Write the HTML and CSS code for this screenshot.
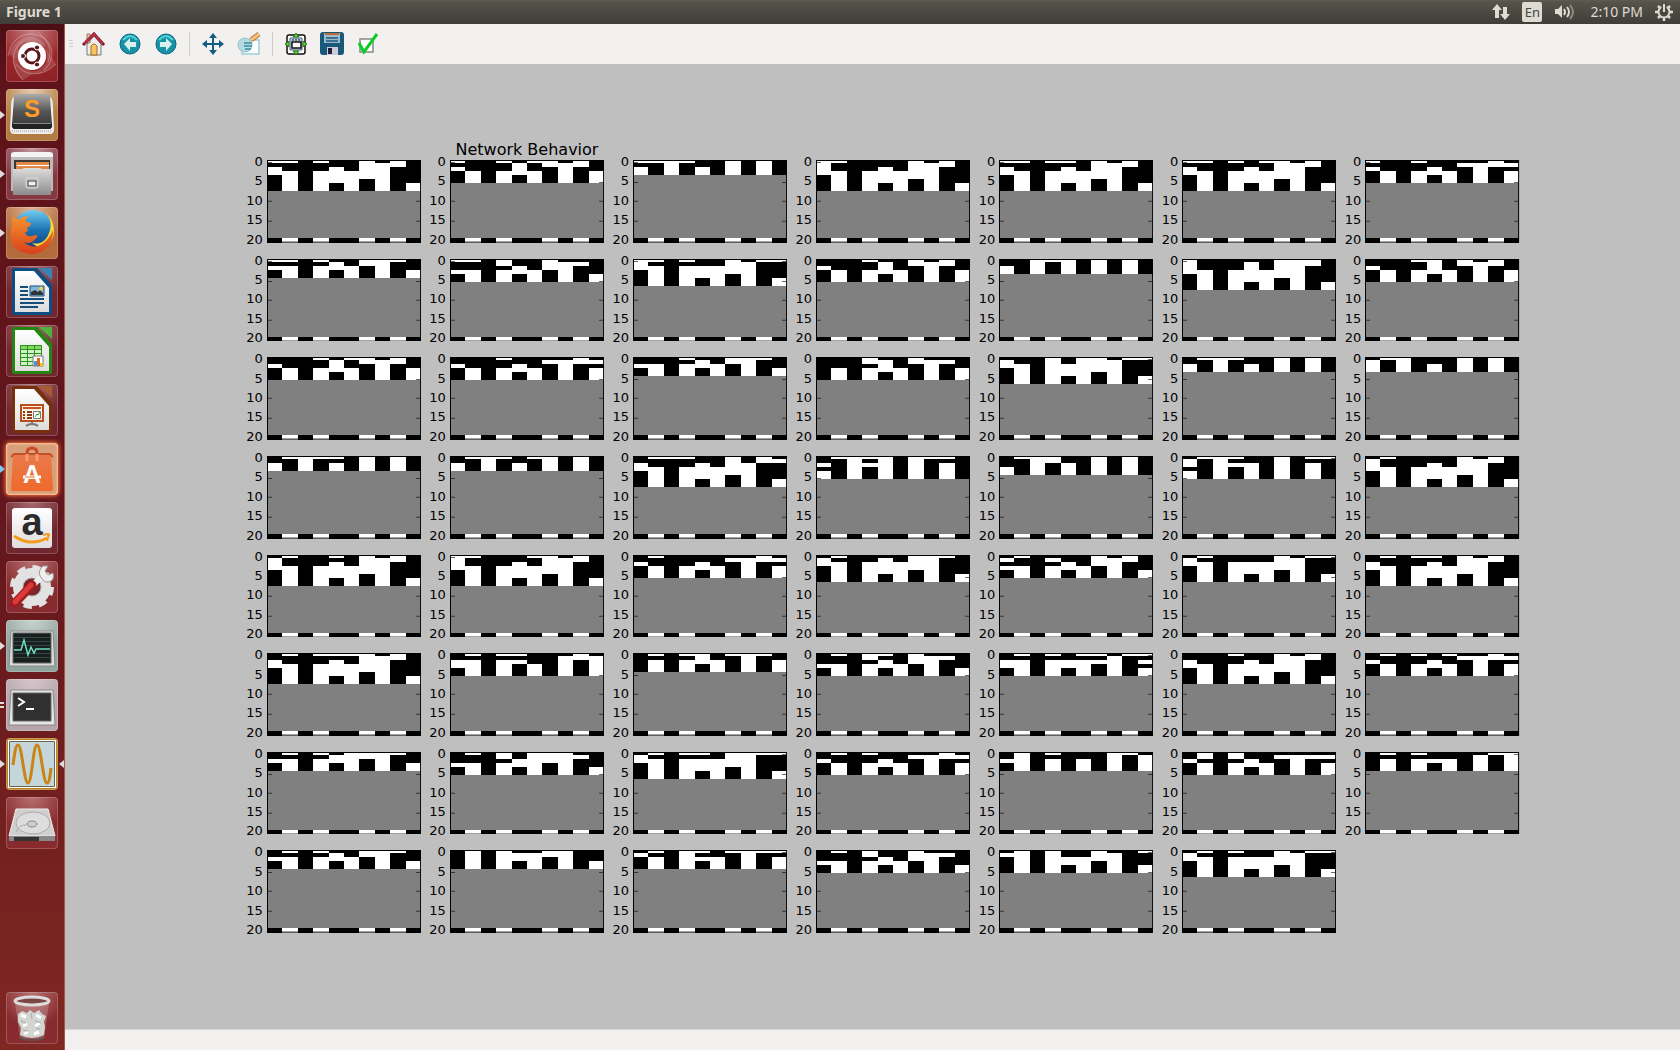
FILE: index.html
```html
<!DOCTYPE html>
<html lang="en">
<head>
<meta charset="utf-8">
<title>Figure 1</title>
<link rel="stylesheet" href="styles.css">
</head>
<body>
<header class="panel">
  <h1 class="panel-title">Figure 1</h1>
  <div class="indicators">
    <svg class="ind-net" width="18" height="18" viewBox="0 0 18 18" fill="#dfdbd2"><path d="M5 1l5 6H7v8H3V7H0zM13 17l-5-6h3V4h4v7h3z"/></svg>
    <span class="lang">En</span>
    <svg class="ind-sound" width="20" height="18" viewBox="0 0 20 18" fill="none" stroke-width="2"><path d="M0 6h3l4-4v13l-4-4H0z" fill="#dfdbd2"/><path d="M9 6q2 3 0 6M12 4q4 5 0 10" stroke="#dfdbd2"/><path d="M15 2q6 7 0 14" stroke="#8b8880"/></svg>
    <time class="clock">2:10 PM</time>
    <svg width="18" height="18" viewBox="0 0 18 18" fill="none" stroke="#dfdbd2"><circle cx="9" cy="9" r="5.5" stroke-width="2"/><path d="M9 15v3M0 9h3M15 9h3M3 3l2 2M15 3l-2 2M3 15l2-2M15 15l-2-2" stroke-width="2.5"/><path d="M9 0v9" stroke="#4a4943" stroke-width="5"/><path d="M9 1v8" stroke-width="2"/></svg>
  </div>
</header>
<div class="desktop">
  <nav class="launcher" aria-label="Launcher">
    <svg class="defs" width="0" height="0" aria-hidden="true"><defs>
      <linearGradient id="metal" x2="0" y2="1"><stop stop-color="#ddd"/><stop offset="1" stop-color="#8c8c8c"/></linearGradient>
      <linearGradient id="dark" x2="0" y2="1"><stop stop-color="#aaa"/><stop offset=".5" stop-color="#555"/><stop offset="1" stop-color="#333"/></linearGradient>
      <linearGradient id="page" x2="0" y2="1"><stop stop-color="#fff"/><stop offset="1" stop-color="#ddd"/></linearGradient>
      <linearGradient id="globe" x2="0" y2="1"><stop stop-color="#6fcdf0"/><stop offset=".5" stop-color="#1c74b4"/><stop offset="1" stop-color="#123a78"/></linearGradient>
      <linearGradient id="fox" x2="0" y2="1"><stop stop-color="#f5942e"/><stop offset="1" stop-color="#d9401c"/></linearGradient>
      <linearGradient id="bag" x2="0" y2="1"><stop stop-color="#e87a4c"/><stop offset="1" stop-color="#f06a2a"/></linearGradient>
    </defs></svg>
    <button class="tile tile-dash" aria-label="Dash"><svg viewBox="0 0 52 52"><g fill="none" stroke="#fff" stroke-opacity=".3"><path d="M2 26C5 8 20 0 34 6S50 30 38 40M17 50C4 36 5 20 16 12M50 34C36 48 18 46 10 34M32 2C44 12 46 22 42 32"/></g><path d="M3 23C12 4 30 2 40 16l-8-2C22 8 12 12 7 28zM17 50C5 40 5 24 12 16l1 12c2 10 12 16 20 12zM50 34C38 44 30 46 22 41l8 0c10-3 13-12 10-23z" fill="#fff" fill-opacity=".15"/><circle cx="26" cy="26" r="14" fill="#fff"/><circle cx="26" cy="26" r="7" fill="none" stroke="#5b1418" stroke-width="3"/><g fill="#5b1418" stroke="#fff"><circle cx="17" cy="26" r="2.5"/><circle cx="31" cy="17.500" r="2.500"/><circle cx="31" cy="34.500" r="2.500"/></g></svg></button>
    <button class="tile tile-gold run" aria-label="Sublime Text"><svg viewBox="0 0 52 52"><path d="M8 8Q5 9 5 20L4 40q0 5 4 5h36q4 0 4-5L47 20Q47 9 44 8z" fill="#eee"/><path d="M6 42h40" stroke="#999" stroke-dasharray="1 1"/><path d="M10 5h32q2 0 2 3l2 28q0 4-3 4H9q-3 0-3-4L8 8q0-3 2-3z" fill="url(#dark)"/><path d="M6 34h40v2q0 4-3 4H9q-3 0-3-4z" fill="#222"/><path d="M7 34.500h38" stroke="#888"/><text x="26" y="28" text-anchor="middle" class="glyph" font-size="24" fill="#ff9d27">S</text></svg></button>
    <button class="tile tile-plum run" aria-label="Files"><svg viewBox="0 0 52 52"><path d="M8 4h36q3 0 3 3v36H5V7q0-3 3-3z" fill="#bbb"/><path d="M5 9V6q1-2 4-2h34q3 0 4 2v3z" fill="#f3f3f3"/><path d="M8 12h36v12H8z" fill="#3d3734"/><path d="M10 14h33v8H10z" fill="#e08848"/><path d="M11 17.500h32" stroke="#fff"/><path d="M7 21h9l2-1h16l2 1h9v26H7z" fill="url(#metal)"/><rect x="20" y="30" width="12" height="10" rx="2" fill="#bbb" stroke="#ddd"/><rect x="22" y="33" width="8" height="5" fill="#eee" stroke="#444"/></svg></button>
    <button class="tile tile-rust run" aria-label="Firefox"><svg viewBox="0 0 52 52"><circle cx="27" cy="23" r="20" fill="url(#globe)"/><path d="M40 6c5 6 6 13 3 20-3 9-10 12-17 10 10 9 22 1 22-12C48 16 44 9 40 6z" fill="#fcd93a"/><path d="M7 8c2 4 3 4 6 4 3-2 6-3 10-3-4 3-4 5-2 6l4 1c0 3-3 4-4 5 2 3 0 4-2 4 1 5 6 5 10 3 3 0 3 2 1 3-3 5-8 6-12 4 8 8 21 6 29-12 1 12-8 24-21 24C8 47 1 33 6 19 6 15 6 11 7 8z" fill="url(#fox)"/></svg></button>
    <button class="tile tile-dim" aria-label="Writer"><svg viewBox="0 0 52 52"><path d="M8 2h23l15 17v28q0 2-2 2H8q-2 0-2-2V4q0-2 2-2z" fill="#0d4d80"/><path d="M9 5h19l15 17v24H9z" fill="url(#page)"/><path d="M33 2h13v12z" fill="#3a83b5"/><g stroke="#174f7c" stroke-width="2"><path d="M14 21h8M14 25h8M14 29h8M14 33h24M14 37h24M14 41h18"/></g><path d="M24 20h14v10H24z" fill="#7db8dc" stroke="#174f7c"/><path d="M25 29v-3l4-2 3 2 2-2 3 3v2z" fill="#333"/><circle cx="35" cy="22.500" r="2" fill="#f5d040"/></svg></button>
    <button class="tile tile-dim" aria-label="Calc"><svg viewBox="0 0 52 52"><path d="M8 2h23l15 17v28q0 2-2 2H8q-2 0-2-2V4q0-2 2-2z" fill="#248510"/><path d="M9 5h19l15 17v24H9z" fill="url(#page)"/><path d="M33 2h13v12z" fill="#4fb33d"/><path d="M14 20h22v21H14z" fill="#d4f3c8"/><path d="M14 20h22v4H14z" fill="#83d964"/><path d="M14.500 20.500h21v20h-21zM21.500 20v21M28.500 20v21M14 24.500h22M14 28.500h22M14 32.500h22M14 36.500h22" fill="none" stroke="#2a911b"/><path d="M27 31h10v10H27z" fill="#fff" stroke="#777"/><path d="M28 36h3v5h-3z" fill="#3b9be0"/><path d="M31 33h3v8h-3z" fill="#e2661e"/><path d="M34 38h3v3h-3z" fill="#f4c414"/></svg></button>
    <button class="tile tile-dim" aria-label="Impress"><svg viewBox="0 0 52 52"><path d="M8 2h23l15 17v28q0 2-2 2H8q-2 0-2-2V4q0-2 2-2z" fill="#78300c"/><path d="M9 5h19l15 17v24H9z" fill="url(#page)"/><path d="M33 2h13v12z" fill="#a85a32"/><path d="M26 36v4m-6 2q2-2 6-2t6 2" fill="none" stroke="#777" stroke-width="2"/><path d="M15 21h22v16H15z" fill="#fff1e4" stroke="#b84e1c" stroke-width="2"/><path d="M17 24h18" stroke="#c9541b" stroke-width="2"/><path d="M17 28h2m2 0h5M17 31h2m2 0h5M17 34h2m2 0h5" stroke="#893b17" stroke-width="2"/><path d="M27.500 27.500h7v7h-7z" fill="#fff" stroke="#777"/><path d="M29 33l2-3 1 1 2-3" fill="none" stroke="#2ba033"/></svg></button>
    <button class="tile tile-glow run run-blue" aria-label="Software Center"><svg viewBox="0 0 52 52"><path d="M21 18V10q0-5 5-5t5 5v8" fill="none" stroke="#c84a22" stroke-width="3"/><path d="M7 11h38l2 35q0 2-2 2H7q-2 0-2-2z" fill="url(#bag)"/><path d="M5 14l3-3h36l3 3" fill="none" stroke="#c45029" stroke-width="2"/><path d="M21 18V11m10 7v-7" stroke="#f79b77" stroke-width="3"/><text x="26" y="40" text-anchor="middle" class="glyph" font-size="25" fill="#fff">A</text><path d="M17 34h18" stroke="#fff" stroke-width="3"/><path d="M19 34h10" stroke="#f06a2a"/></svg></button>
    <button class="tile tile-dim" aria-label="Amazon"><svg viewBox="0 0 52 52"><rect x="6" y="6" width="40" height="40" rx="3" fill="url(#page)"/><text x="26" y="33" text-anchor="middle" class="glyph" font-size="38" fill="#2b2a2c">a</text><path d="M8 34q16 11 33 2" fill="none" stroke="#f79a1c" stroke-width="3"/><path d="M37 33q7-2 6 0t-2 6" fill="none" stroke="#f79a1c" stroke-width="2"/></svg></button>
    <button class="tile tile-red" aria-label="System Settings"><svg viewBox="0 0 52 52"><circle cx="26" cy="26" r="14" fill="none" stroke="#e2e2e2" stroke-width="10"/><circle cx="26" cy="26" r="19" fill="none" stroke="#e2e2e2" stroke-width="6" stroke-dasharray="8 6.900"/><circle cx="26" cy="26" r="9" fill="#7b272b" stroke="#aaa"/><path d="M24 27l12-12" stroke="#eee" stroke-width="6"/><path d="M34 15q-2-6 3-10l5 0-3 5 3 4 5-2q2 7-4 9-5 1-9-6z" fill="#eee" stroke="#999"/><path d="M9 42L26 24" stroke="#a01d20" stroke-width="9" stroke-linecap="round"/><path d="M9 41L25 24" stroke="#dc3a3a" stroke-width="5" stroke-linecap="round"/></svg></button>
    <button class="tile tile-mint run" aria-label="System Monitor"><svg viewBox="0 0 52 52"><path d="M5 11h42l2 35H3z" fill="#d9d9d9" stroke="#888"/><path d="M7 13h38v30H7z" fill="#17201f" stroke="#666"/><path d="M8 17.500h36M8 21.500h36M8 25.500h36M8 33.500h36M8 37.500h36" stroke="#354542"/><path d="M8 30h7l3-10 4 15 3-8 3 6 2-4h14" fill="none" stroke="#6fdcc0" stroke-width="1.500"/></svg></button>
    <button class="tile tile-grey run run-two" aria-label="Terminal"><svg viewBox="0 0 52 52"><path d="M5 11h42l2 35H3z" fill="#e4e4e4" stroke="#888"/><path d="M7 14h38v28H7z" fill="#303030" stroke="#666"/><path d="M12 19l6 4-6 4" fill="none" stroke="#fff" stroke-width="2"/><path d="M20 30h8" stroke="#fff" stroke-width="2"/></svg></button>
    <button class="tile tile-plot run run-active" aria-label="Matplotlib"><svg viewBox="0 0 52 52"><path d="M3 3h46v46H3z" fill="#c5d6da" stroke="#fff" stroke-width="2"/><path d="M3.500 3.500h45v45h-45z" fill="none" stroke="#665"/><path d="M7 27C9 12 10 7 12 7c4 0 6 38 10 38S27 7 31 7s6 38 10 38c2 0 3-6 4-15" fill="none" stroke="#ca8414" stroke-width="3"/></svg></button>
    <button class="tile tile-red" aria-label="Disk"><svg viewBox="0 0 52 52"><path d="M10 12h32l7 27H3z" fill="#cfcfcf" stroke="#eee"/><path d="M3 39h46v5H3z" fill="#888"/><path d="M8 40h25v4H8z" fill="#333"/><ellipse cx="27" cy="26" rx="17" ry="11" fill="#ddd" stroke="#aaa"/><ellipse cx="26" cy="27" rx="5" ry="3" fill="#ccc" stroke="#888"/><path d="M10 35q4-8 10-7" fill="none" stroke="#aaa"/></svg></button>
    <button class="tile tile-red tile-trash" aria-label="Trash"><svg viewBox="0 0 52 52"><path d="M9 11h34l-5 36H14z" fill="#fff" fill-opacity=".2"/><path d="M14 45q12 5 24 0v2q-12 4-24 0z" fill="#555"/><path d="M12 22l4-3 5 2 3-3 4 3 5-3 3 4 4 2-2 6 1 5-1 8q-12 6-24 0l1-7-3-6z" fill="#d3d5d2"/><path d="M15 23l5 2m10-2l5 3M17 34l4-2m8 2l5-3M18 42l4-2m6 2l5-2" fill="none" stroke="#fff" stroke-width="3"/><path d="M15 29l5 2m9-2l6 2M17 38l5 1m8-3l4 1M25 21l1 6" stroke="#a5aaa2"/><ellipse cx="26" cy="9" rx="17" ry="4" fill="#7d4543" stroke="#ddd" stroke-width="3"/></svg></button>
  </nav>
  <main class="window">
    <div class="toolbar" role="toolbar" aria-label="Figure tools">
      <span class="handle"></span>
      <button class="tool" aria-label="Home"><svg viewBox="0 0 24 24"><path d="M5 12v11h14V12l-7-8z" fill="#eee" stroke="#777"/><path d="M5 2h3v9H5z" fill="#f6d08c" stroke="#976"/><path d="M1 13L12 2l10 11" fill="none" stroke="#641525" stroke-width="3"/><path d="M2 12L12 2l9 10" fill="none" stroke="#c12b45" stroke-width="2"/><path d="M9 23v-9q3-4 6 0v9z" fill="#f9c35e" stroke="#a06a20"/></svg></button>
      <button class="tool" aria-label="Back"><svg viewBox="0 0 24 24"><circle cx="12" cy="12" r="10" fill="#1793a8" stroke="#0c6280"/><path d="M5 8q7-8 14 0" fill="none" stroke="#4cd0d8" stroke-width="2"/><path d="M6 12l6-6v4h6v5h-6v4z" fill="#d9f0ee"/></svg></button>
      <button class="tool" aria-label="Forward"><svg viewBox="0 0 24 24"><circle cx="12" cy="12" r="10" fill="#1793a8" stroke="#0c6280"/><path d="M5 8q7-8 14 0" fill="none" stroke="#4cd0d8" stroke-width="2"/><path d="M18 12l-6-6v4H6v5h6v4z" fill="#d9f0ee"/></svg></button>
      <span class="sep"></span>
      <button class="tool" aria-label="Pan"><svg viewBox="0 0 24 24" fill="#125f82"><path d="M11 4h2v16h-2zM4 11h16v2H4z"/><path d="M12 1l4 5H8zM12 23l4-5H8zM1 12l5-4v8zM23 12l-5-4v8z"/></svg></button>
      <button class="tool" aria-label="Zoom"><svg viewBox="0 0 24 24"><path d="M5 8h17v14H5z" fill="#fff" stroke="#9bd0da" stroke-width="1.500"/><path d="M14 8l8-6" stroke="#b57830" stroke-width="5"/><path d="M14 8l8-6" stroke="#fbc184" stroke-width="3"/><circle cx="8" cy="13" r="7" fill="#b3dce1" stroke="#94bcc8"/><path d="M7 11h8M7 14h8M8 17h6" stroke="#3c8ba3" stroke-width="1.500"/></svg></button>
      <span class="sep"></span>
      <button class="tool" aria-label="Configure subplots"><svg viewBox="0 0 24 24"><rect x="3" y="3" width="18" height="19" rx="2" fill="#fff" stroke="#111" stroke-width="1.500"/><path d="M6 6h12v12H6z" fill="#b8d3ec" stroke="#567"/><path d="M8 10h9v6H8z" fill="#fff" stroke="#111" stroke-width="1.500"/><path d="M8 8h9" stroke="#111" stroke-dasharray="2 1"/><path d="M12 1l3 4H9zM12 23l3-4H9zM1 12l4-3v6zM23 12l-4-3v6z" fill="#4edb25" stroke="#174b12" stroke-width=".7"/></svg></button>
      <button class="tool" aria-label="Save"><svg viewBox="0 0 24 24"><rect width="24" height="23" rx="3" fill="#185878"/><path d="M4 1h16v10H4z" fill="#9fb9cc"/><path d="M5 1h14v2H5z" fill="#b86b34"/><path d="M6 6h12M6 9h12" stroke="#185878" stroke-width="1.500"/><path d="M7 15h11v8H7z" fill="#ccd"/><path d="M8 16h4v6H8z" fill="#223"/></svg></button>
      <button class="tool" aria-label="Edit parameters"><svg viewBox="0 0 24 24"><path d="M4 7h13v13H4z" fill="#fff" stroke="#888" stroke-width="1.500"/><path d="M3 11l5 9L21 2" fill="none" stroke="#0ccb27" stroke-width="3"/></svg></button>
    </div>
    <section class="figure" id="figure" aria-label="Network Behavior"></section>
    <footer class="statusbar"></footer>
  </main>
</div>
<script src="plots.js"></script>
</body>
</html>
```

FILE: styles.css
```css
* { box-sizing: border-box; }
body {
  margin: 0;
  min-height: 100vh;
  display: flex;
  flex-direction: column;
  font-family: "DejaVu Sans", sans-serif;
  background: #bfbfbf;
}
button { padding: 0; border: 0; background: none; font: inherit; }
svg { display: block; }

.panel {
  height: 24px;
  display: flex;
  align-items: center;
  justify-content: space-between;
  padding: 0 7px 0 6px;
  background: linear-gradient(#5f5d51, #55534a 10%, #3e3d38);
  color: #dfdbd2;
  font-family: "Noto Sans", "Open Sans", sans-serif;
}
.panel-title { margin: 0; font-size: 14px; line-height: 24px; font-weight: 700; }
.indicators { display: flex; align-items: center; }
.lang {
  width: 20px;
  height: 20px;
  margin: 0 13px 0 12px;
  border-radius: 2px;
  background: #dfdbd2;
  color: #45443f;
  font-size: 13px;
  line-height: 20px;
  text-align: center;
}
.clock { margin: 0 12px 0 15px; font-size: 14px; line-height: 24px; }

.desktop { flex: 1; display: flex; }
.launcher {
  width: 65px;
  display: flex;
  flex-direction: column;
  gap: 7px;
  padding: 6px 6px;
  background: linear-gradient(#4c0d14, #5e131a 5%, #64171c 50%, #7f2722);
  border-right: 1px solid #a85550;
}
.defs { position: absolute; }
.tile {
  position: relative;
  width: 52px;
  height: 52px;
  border-radius: 4px;
  box-shadow: inset 0 0 0 1px rgba(255, 255, 255, .2);
}
.tile-dash { background: radial-gradient(circle at 50% 0, #c58084, #9a2528 60%, #8b2226); }
.tile-gold { background: radial-gradient(circle at 50% 0, #e6cdb0, #b27c42 60%); }
.tile-plum { background: radial-gradient(circle at 50% 0, #c697a1, #873943 60%); }
.tile-rust { background: radial-gradient(circle at 50% 0, #ddb598, #b36b3b 60%); }
.tile-dim { background: radial-gradient(circle at 50% 0, #a56a70, #71272f 60%); }
.tile-glow { background: #d8a078; box-shadow: 0 0 4px 1px #ff6f3c, inset 0 0 2px 1px #ffc6a0; }
.tile-red { background: radial-gradient(circle at 50% 0, #b77070, #872b2e 60%); }
.tile-mint { background: radial-gradient(circle at 50% 0, #c9d3cf, #92a49f 60%); }
.tile-grey { background: radial-gradient(circle at 50% 0, #d6c6cb, #b5a5aa 60%); }
.tile-plot { background: #bd8128; }
.tile-trash { margin-top: auto; }
.glyph { font-family: "Liberation Sans", sans-serif; font-weight: 700; }
.run::before, .run-active::after, .run-two::after {
  content: "";
  position: absolute;
  top: 22px;
  left: -6px;
  border: 4px solid transparent;
  border-left: 5px solid #ddd;
  border-right: 0;
}
.run-blue::before { border-left-color: #7cc8f0; }
.run-active::after { left: auto; right: -6px; border-left: 0; border-right: 5px solid #ddd; }
.run-two::before, .run-two::after { border: 0; width: 4px; height: 2px; background: #ddd; top: 23px; }
.run-two::after { top: 27px; }

.window { flex: 1; min-width: 0; display: flex; flex-direction: column; }
.toolbar {
  height: 40px;
  display: flex;
  align-items: center;
  padding-left: 4px;
  background: #f2f1f0;
}
.handle { width: 4px; height: 8px; margin-right: 3px; background: repeating-linear-gradient(#ccc 0 1px, transparent 1px 3px); }
.tool { width: 36px; height: 36px; display: grid; place-items: center; }
.tool svg { width: 24px; height: 24px; }
.sep { width: 1px; height: 24px; margin: 0 5px; background: #cfcdca; }

.figure {
  flex: 1;
  display: grid;
  grid-template-columns: repeat(7, 1fr);
  grid-template-rows: repeat(8, 1fr);
  gap: 16px 5px;
  padding: 96px calc(10% - 1px) 96px calc(12% - 16px);
  background: #bfbfbf;
}
.subplot { position: relative; margin: 0; display: flex; gap: 4px; min-height: 0; }
.subplot-title {
  position: absolute;
  left: 24px;
  right: 0;
  bottom: 100%;
  text-align: center;
  white-space: nowrap;
  font-size: 16px;
  line-height: 20px;
}
.ticks {
  width: 20px;
  margin: -6px 0 -5px;
  display: flex;
  flex-direction: column;
  justify-content: space-between;
  text-align: right;
  font-size: 13px;
  line-height: 16px;
}
.axes { flex: 1; min-width: 0; position: relative; }
.axes svg { position: absolute; inset: 0; width: 100%; height: 100%; }
.statusbar { height: 21px; background: #f2f1f0; border-top: 1px solid #d6d4d1; }
```

FILE: plots.js
```js
// Network states that recur in most runs, one digit per node (1 = white).
const STATES = {
  A: '1101111100', B: '0101111100', C: '0101110100', E: '0101010101',
  F: '1010101010', G: '1000101100', H: '1000100100', I: '0101110101',
  J: '0000001110', K: '1101110100', L: '0000101100', M: '0000001111',
  N: '0000101110', P: '1000001110', Q: '1000001100', R: '0010001010'
};

// Each run lists its successive states until it settles.
const RUNS = [
  '1101001010 J G A B C E E', '1001011010 N H I E E', '1111001010 R F F',
  '1100001010 P G A B C E E', '1101101010 J G A B C E E', '1101011010 J G A B C E E',
  '1001000010 M H I E E',

  '1101001110 L K E E', '1101001000 0001001110 L K E E', '1101001011 Q A B C E E',
  '0001001010 N H I E E', '0011101010 0010101010 F F', '1000001110 1000101110 G A B C E E',
  '0001101010 N H I E E',

  '0001011010 N H I E E', '0001000010 M H I E E', '0001001110 L K E E',
  '0001001000 0001101110 0000100100 I E E', '0001011011 1001011100 A B C E E',
  '0111001010 R F F', '0110001010 1010001010 F F',

  '0111101010 R F F', '0111011010 R F F', '0111001010 0000001011 G A B C E E',
  '0111101110 0010101000 1011101010 0010101010 F F', '0111001010 0011001010 0010101010 F F',
  '0111001011 1010001000 1011101010 0010101010 F F', '0100001010 P G A B C E E',

  '0100101010 P G A B C E E', '1100011010 P G A B C E E', '0100000010 M H I E E',
  '0100001110 G A B C E E', '0100001010 1001001110 L K E E', '0100001011 Q A B C E E',
  '0101101010 J G A B C E E',

  '0101111010 J G A B C E E', '0101100010 0000000111 1101100101 1101010101 E E',
  '0101101110 0000100100 I E E', '0101101000 0001001110 L K E E',
  '0101011011 0000000100 1101111101 K E E', '0001001010 J G A B C E E',
  '0101010010 M H I E E',

  '0101011110 0000111100 K E E', '0101011100 0001011110 0000111100 K E E',
  '0101101111 Q A B C E E', '0101000010 M H I E E', '0101000110 0100000101 1101010101 E E',
  '0101000000 0101001111 H I E E', '0101000011 0000000101 I E E',

  '0101001110 L K E E', '0101001100 B C E E', '0101101111 1001000100 I E E',
  '0101001000 0001001110 L K E E', '0101001001 1101001100 B C E E', '0101001011 Q A B C E E'
];

const TARGET = '0101001010';
const X = [0, 15, 31, 46, 62, 77, 92, 108, 123, 139, 154];
const TICKS = [2, 22, 41, 61, 80];

function band(state, top, bottom) {
  let out = '';
  for (let i = 0; i < 10; i++) {
    const fill = state[i] === '1' ? '#fff' : '#000';
    out += `<rect x="${X[i]}" y="${top}" width="${X[i + 1] - X[i]}" height="${bottom - top}" fill="${fill}"/>`;
  }
  return out;
}

function plot(run) {
  let body = '<rect width="154" height="83" fill="#808080"/>';
  run.split(' ').forEach((key, i) => {
    body += band(STATES[key] || key, i ? 4 * i - 1 : 0, 4 * i + 3);
  });
  body += band(TARGET, 78, 83);
  for (const y of TICKS) {
    body += `<path d="M1 ${y + 0.5}h4M149 ${y + 0.5}h4" stroke="#000" stroke-opacity=".6"/>`;
  }
  body += '<rect x=".5" y=".5" width="153" height="82" fill="none" stroke="#000"/>';
  return `<svg viewBox="0 0 154 83" preserveAspectRatio="none" shape-rendering="crispEdges">${body}</svg>`;
}

document.getElementById('figure').innerHTML = RUNS.map((run, i) => `
  <figure class="subplot">
    ${i === 1 ? '<figcaption class="subplot-title">Network Behavior</figcaption>' : ''}
    <div class="ticks"><span>0</span><span>5</span><span>10</span><span>15</span><span>20</span></div>
    <div class="axes">${plot(run)}</div>
  </figure>`).join('');
```
